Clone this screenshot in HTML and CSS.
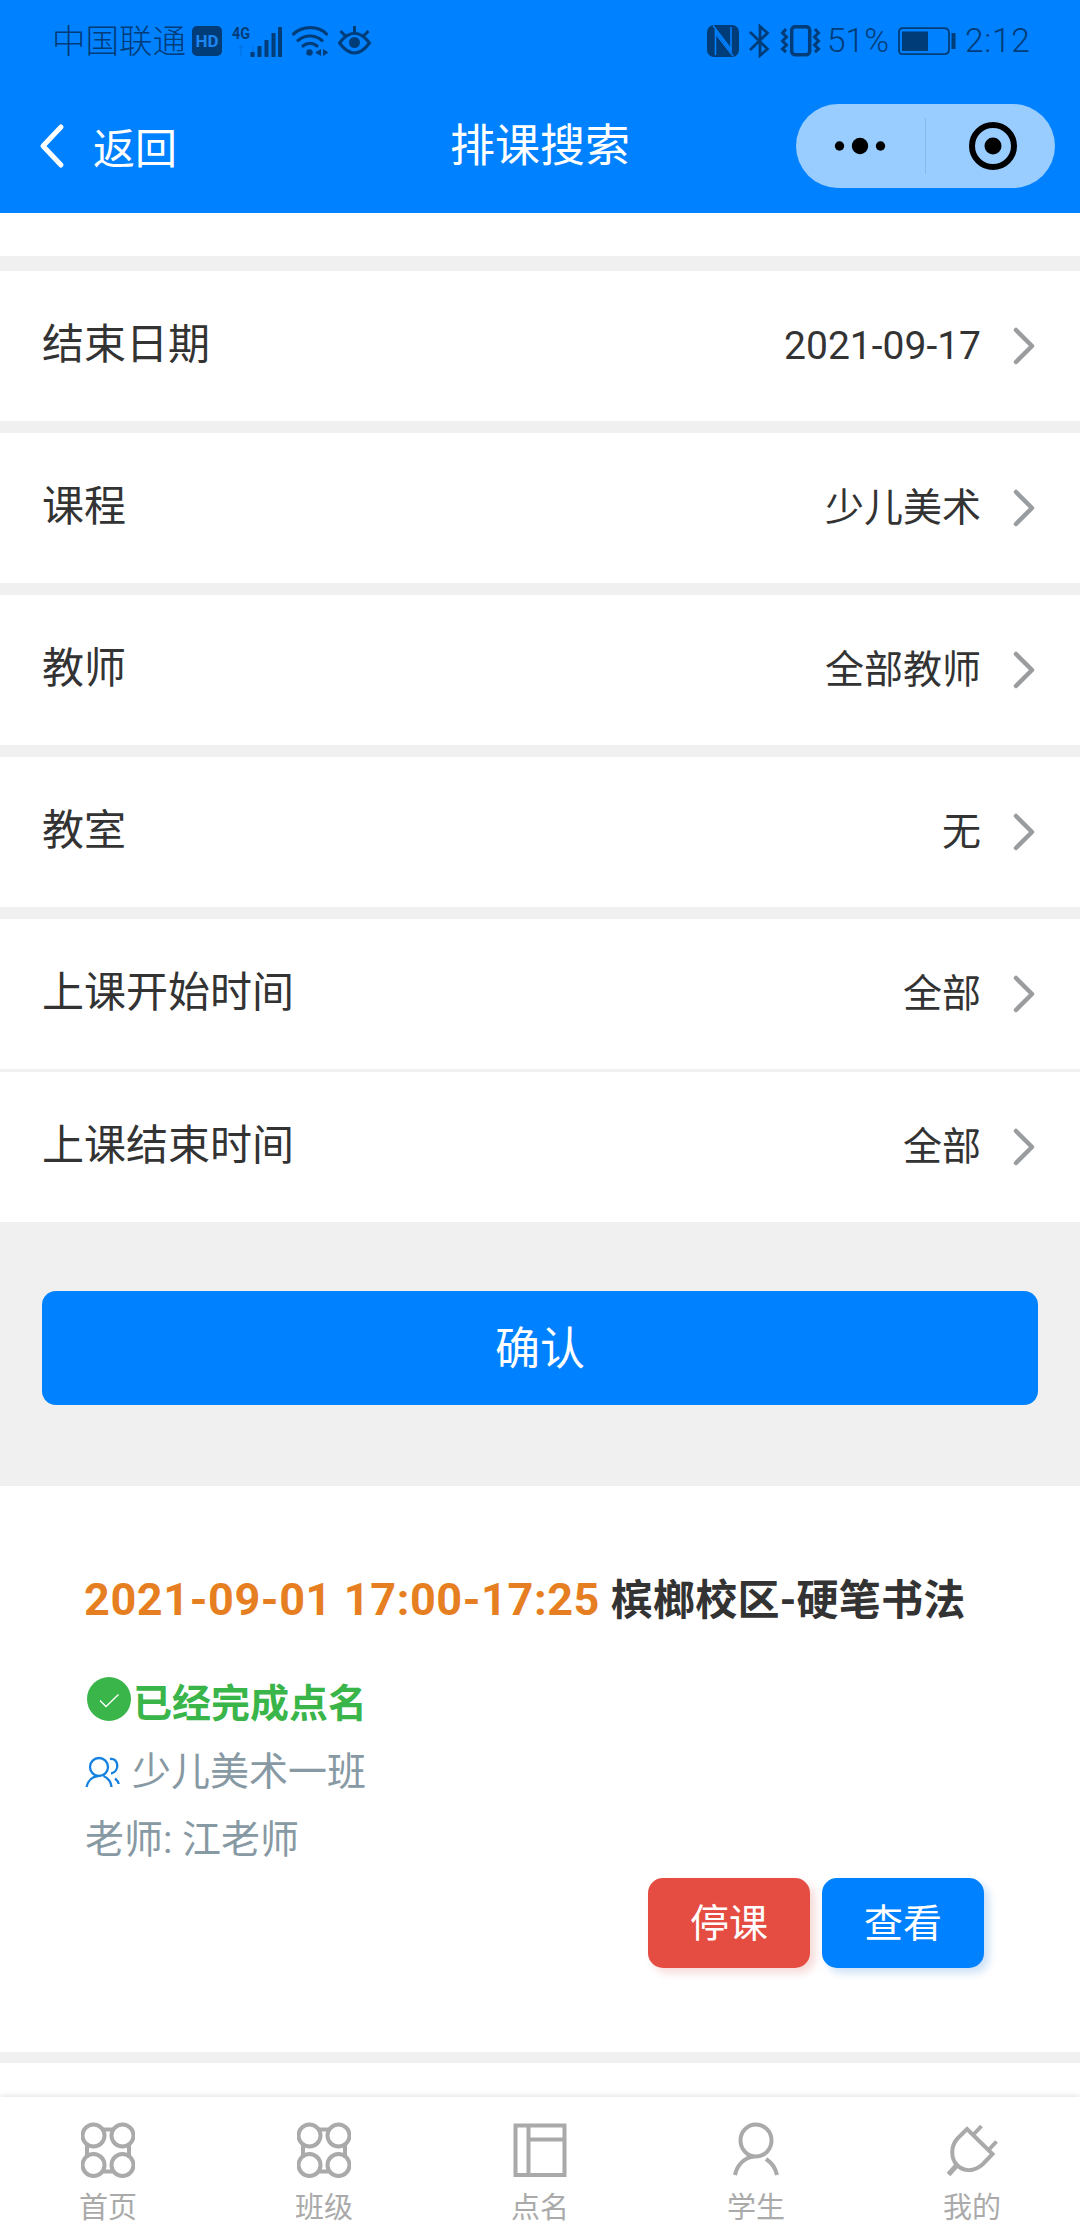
FILE: index.html
```html
<!DOCTYPE html>
<html lang="zh-CN">
<head>
<meta charset="utf-8">
<title>排课搜索</title>
<link rel="stylesheet" href="styles.css">
</head>
<body>
<svg class="defs" width="0" height="0" aria-hidden="true">
  <symbol id="chevron" viewBox="0 0 24 40"><path d="M3 4 19 20 3 36" fill="none" stroke="#9a9d9f" stroke-width="4.500" stroke-linecap="round" stroke-linejoin="round"/></symbol>
  <symbol id="clover" viewBox="0 0 54 56"><g fill="none" stroke="#aaa" stroke-width="4"><path d="M21 7.500h12M21 49.500h12M6 22v12M48 22v12"/><circle cx="12.500" cy="13.500" r="11"/><circle cx="41.500" cy="13.500" r="11"/><circle cx="12.500" cy="43" r="11"/><circle cx="41.500" cy="43" r="11"/></g></symbol>
</svg>
<div class="page">
  <header class="header">
    <div class="status">
      <div class="status-group">
        <span class="carrier">中国联通</span>
        <svg class="hd" width="30" height="30" viewBox="0 0 30 30"><rect width="30" height="30" rx="5" fill="#003c78"/><text x="15" y="21" text-anchor="middle" textLength="23" lengthAdjust="spacingAndGlyphs" font-size="17" font-weight="700" fill="#1d86f2">HD</text></svg>
        <svg class="signal" width="51" height="34" viewBox="232 22 51 34"><text x="232" y="37" font-size="16" font-weight="700" textLength="18" lengthAdjust="spacingAndGlyphs" fill="#003c78">4G</text><text x="235" y="54" font-size="12" fill="#003c78" opacity=".25">↑↓</text><path d="M252.500 50v5M259.500 44v11M266.500 38v17M273.500 31v24M280 25v30" stroke="#003c78" stroke-width="4"/></svg>
        <svg class="wifi" width="38" height="32" viewBox="291 24 38 32"><g fill="none" stroke="#003c78" stroke-width="3.200" stroke-linecap="round"><path d="M293.500 33c9-8.500 25-8.500 33 0M298 39.500c7-6 17-6 24 0M303 45c4-3.500 10-3.500 14 0"/></g><circle cx="309.500" cy="51.500" r="3.200" fill="#003c78"/><path d="m321 48v7l-6-3.500zM323 48v7l5.500-3.500z" fill="#003c78"/></svg>
        <svg width="34" height="30" viewBox="338 26 34 30"><g fill="none" stroke="#003c78" stroke-width="3"><path d="M339.500 43q15-19.500 30 0-15 20-30 0zM354.500 26v8M340.500 31l5 5M368.500 31l-5 5"/></g><circle cx="354.500" cy="42.500" r="5.500" fill="#003c78"/></svg>
      </div>
      <div class="status-group">
        <svg width="32" height="32" viewBox="707 24 32 32"><rect x="707" y="24" width="32" height="32" rx="7" fill="#003c78"/><path d="M715.500 54V30l15.500 20V26" fill="none" stroke="#0081ff" stroke-width="1.600"/><path d="M713 24.500 731 48M715 32l18 23" fill="none" stroke="#0081ff" stroke-width="1.300"/></svg>
        <svg class="bt" width="22" height="34" viewBox="748 23 22 34"><path d="M750 31l17.500 17-7.500 6.500v-29l7.500 6.500L750 49" fill="none" stroke="#003c78" stroke-width="2.800"/></svg>
        <svg class="vib" width="41" height="32" viewBox="780 24 41 32"><g fill="none" stroke="#003c78"><rect x="791.700" y="25.700" width="18" height="28" rx="3.500" stroke-width="3.500"/><path d="M786 28l-3.500 4 4 4-4 4 4 4-4 4 3.500 3M815 28l3.500 4-4 4 4 4-4 4 4 4-3.500 3" stroke-width="3"/></g></svg>
        <span class="percent">51%</span>
        <svg class="battery" width="58" height="28" viewBox="898 26 58 28"><path d="M903 27.200h41q5 0 5 5v16q0 5-5 5h-41q-4 0-4-4v-18q0-4 4-4z" fill="none" stroke="#003c78" stroke-width="1.800"/><path d="M902 30.500h26v19.500h-26zM951.500 32h4v16h-4z" fill="#003c78"/></svg>
        <span class="clock">2:12</span>
      </div>
    </div>
    <div class="navbar">
      <div class="back">
        <svg width="28" height="46" viewBox="0 0 28 46"><path d="M24 4 6 23l18 19" fill="none" stroke="#fff" stroke-width="5" stroke-linecap="round" stroke-linejoin="round"/></svg>
        <span>返回</span>
      </div>
      <h1 class="title">排课搜索</h1>
      <div class="capsule">
        <svg width="52" height="18" viewBox="0 0 52 18"><circle cx="5.500" cy="9" r="4.700"/><circle cx="26" cy="9" r="8.200"/><circle cx="46.500" cy="9" r="4.700"/></svg>
        <i class="capsule-line"></i>
        <svg width="48" height="48" viewBox="0 0 48 48"><circle cx="24" cy="24" r="21" fill="none" stroke="#000" stroke-width="6"/><circle cx="24" cy="24" r="8.500"/></svg>
      </div>
    </div>
  </header>

  <main class="content">
    <div class="row-tail"></div>
    <div class="row"><span class="label">结束日期</span><span class="value">2021-09-17</span><svg class="arrow"><use href="#chevron"/></svg></div>
    <div class="row"><span class="label">课程</span><span class="value">少儿美术</span><svg class="arrow"><use href="#chevron"/></svg></div>
    <div class="row"><span class="label">教师</span><span class="value">全部教师</span><svg class="arrow"><use href="#chevron"/></svg></div>
    <div class="row"><span class="label">教室</span><span class="value">无</span><svg class="arrow"><use href="#chevron"/></svg></div>
    <div class="row row-joined"><span class="label">上课开始时间</span><span class="value">全部</span><svg class="arrow"><use href="#chevron"/></svg></div>
    <div class="row row-last"><span class="label">上课结束时间</span><span class="value">全部</span><svg class="arrow"><use href="#chevron"/></svg></div>
    <div class="confirm-area"><button class="confirm">确认</button></div>

    <section class="card">
      <h2 class="card-title"><span class="time">2021-09-01 17:00-17:25</span> 槟榔校区-硬笔书法</h2>
      <div class="done">
        <svg width="44" height="44" viewBox="0 0 44 44"><circle cx="22" cy="22" r="22" fill="#39b54a"/><path d="m13 23.500 6 6L31.500 17.500" fill="none" stroke="#fff" stroke-width="1.300"/></svg>
        <span>已经完成点名</span>
      </div>
      <div class="meta">
        <svg width="36" height="32" viewBox="0 0 36 32"><g fill="none" stroke="#1480e0" stroke-width="2.300"><circle cx="14" cy="11" r="9"/><path d="M1.500 31C3 24 8 20.500 13 20M18.500 20C23 22 26 26 26.500 31M25 3c9-1.500 10 13 1 14.500M30 22.500c2 1.500 3.500 3.500 3.700 5.500"/></g></svg>
        <span>少儿美术一班</span>
      </div>
      <div class="meta teacher">老师: 江老师</div>
      <div class="actions"><button class="btn btn-red">停课</button><button class="btn btn-blue">查看</button></div>
    </section>
    <section class="card-next"></section>
  </main>

  <nav class="tabbar">
    <div class="tab"><svg><use href="#clover"/></svg><span>首页</span></div>
    <div class="tab"><svg><use href="#clover"/></svg><span>班级</span></div>
    <div class="tab"><svg viewBox="0 0 54 56"><g fill="none" stroke="#aaa" stroke-width="4"><path d="M2.500 3.500h49v49.500h-49zM15.500 3.500V53M15.500 17.500h36"/></g></svg><span>点名</span></div>
    <div class="tab"><svg viewBox="0 0 54 56"><g fill="none" stroke="#aaa" stroke-width="4"><ellipse cx="27" cy="18.500" rx="15.500" ry="16"/><path d="M6 53C8 43 16 35 25 34.500M37 37q9 6 11 16"/></g></svg><span>学生</span></div>
    <div class="tab"><svg viewBox="0 0 54 56"><g fill="none" stroke="#aaa" stroke-width="4"><path d="M22 7 47.500 32 38 42C28 51 18 49 12 43S5 24 13 16zM28 13l8.500-9M44 27.500l7.500-8"/><path d="M12 43 3.500 52.500" stroke-width="5"/></g></svg><span>我的</span></div>
  </nav>
</div>
</body>
</html>
```
FILE: styles.css
```css
* { box-sizing: border-box; margin: 0; padding: 0; }
body { background: #fff; color: #333; font-family: Roboto, "Noto Sans CJK SC", sans-serif; }
button { border: 0; font-family: inherit; color: #fff; }
svg { display: block; flex: none; }
.defs { position: absolute; }
.page { display: flex; flex-direction: column; width: 1080px; height: 2240px; overflow: hidden; }

.header { height: 213px; flex: none; background: #0081ff; }
.status { display: flex; justify-content: space-between; height: 82px; padding: 0 50px 0 52px; color: #003c78; }
.status-group { display: flex; align-items: center; }
.carrier { width: 140px; padding-top: 2px; font-size: 33.500px; font-weight: 300; line-height: 82px; white-space: nowrap; }
.signal { margin-left: 10px; }
.wifi { margin: 0 9px 0 8px; }
.bt { margin-left: 9px; }
.vib { margin: 0 6px 0 10px; }
.percent, .clock { font-size: 33.500px; font-weight: 300; line-height: 82px; white-space: nowrap; }
.percent { width: 71px; }
.battery { margin-right: 9px; }
.clock { width: 65px; letter-spacing: .7px; }

.navbar { display: grid; grid-template-columns: 1fr auto 1fr; align-items: center; height: 128px; color: #fff; }
.back { display: flex; align-items: center; gap: 28px; padding-left: 37px; font-size: 42px; line-height: 60px; }
.back span { padding-top: 7px; }
.title { padding-top: 2px; font-size: 45px; font-weight: 400; line-height: 64px; }
.capsule { display: flex; align-items: center; justify-content: space-between; justify-self: end; width: 259px; height: 84px; margin-right: 25px; padding: 0 38px; border-radius: 42px; background: #99cdff; }
.capsule-line { width: 1px; height: 56px; margin-left: 25px; margin-right: 30px; background: #85bbf0; }

.content { flex: 1; min-height: 0; overflow: hidden; background: #f0f0f0; }
.row-tail { height: 43px; margin-bottom: 15px; background: #fff; }
.row { display: flex; align-items: center; height: 150px; margin-bottom: 12px; padding: 0 43px 0 42px; background: #fff; }
.row-joined { margin-bottom: 3px; }
.row-last { margin-bottom: 0; }
.label { flex: 1; padding-bottom: 2px; font-size: 42px; line-height: 60px; }
.value { font-size: 39px; line-height: 56px; }
.arrow { width: 24px; height: 40px; margin-left: 32px; }
.confirm-area { height: 264px; padding: 69px 42px 0; }
.confirm { display: block; width: 100%; height: 114px; padding-bottom: 6px; border-radius: 14px; background: #0081ff; font-size: 45px; }

.card { height: 566px; padding: 82px 84px 0; background: #fff; }
.card-title { font-size: 42px; line-height: 64px; letter-spacing: .25px; white-space: nowrap; }
.time { font-size: 45px; letter-spacing: .6px; color: #e67e22; }
.done { display: flex; align-items: center; gap: 2px; height: 68px; margin-top: 34px; padding-left: 3px; font-size: 39px; font-weight: 700; line-height: 60px; color: #39b54a; }
.done span { padding-top: 5px; }
.done svg { margin-bottom: 4px; }
.meta { display: flex; align-items: center; gap: 11px; height: 68px; padding-top: 6px; font-size: 39px; line-height: 68px; color: #8799a3; }
.meta svg { margin-left: 1px; }
.teacher { padding-left: 1px; }
.actions { display: flex; justify-content: flex-end; gap: 12px; padding-right: 12px; margin-top: 7px; }
.btn { width: 162px; height: 90px; padding-bottom: 6px; border-radius: 15px; font-size: 39px; }
.btn-red { background: #e54d42; box-shadow: 5px 5px 8px rgba(204, 69, 59, .2); }
.btn-blue { background: #0081ff; box-shadow: 5px 5px 8px rgba(0, 102, 204, .2); }
.card-next { height: 40px; margin-top: 11px; background: #fff; }

.tabbar { z-index: 1; display: grid; grid-template-columns: repeat(5, 1fr); height: 143px; flex: none; background: #fff; box-shadow: 0 -1px 6px rgba(0, 0, 0, .12); }
.tab { display: flex; flex-direction: column; align-items: center; padding-top: 25px; font-size: 29px; line-height: 42px; color: #aaa; }
.tab svg { width: 54px; height: 56px; margin-bottom: 9px; }
```
